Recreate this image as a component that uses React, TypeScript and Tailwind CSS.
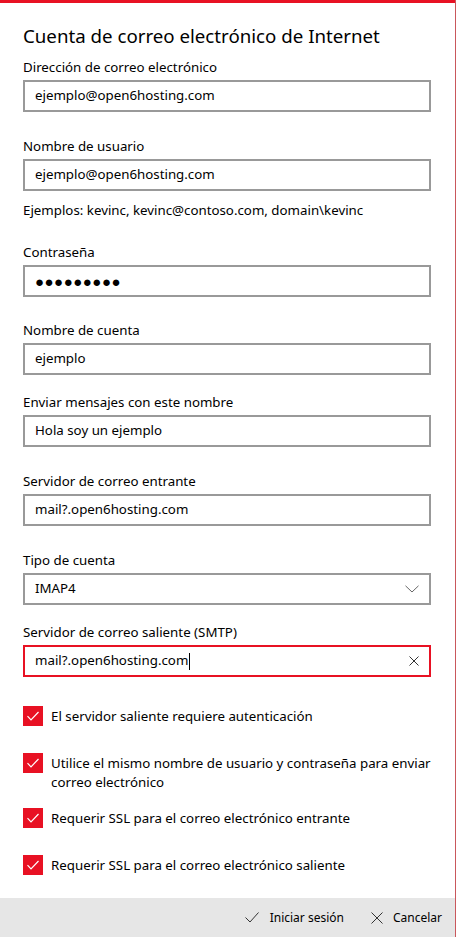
import type { ReactNode } from "react";

const font = { fontFamily: '"Noto Sans", "Open Sans", sans-serif' };

function Label({ children, className = "" }: { children: ReactNode; className?: string }) {
  return <p className={`h-5 text-[13.3px] leading-5 text-black ${className}`}>{children}</p>;
}

function Field({
  label,
  value,
  mt,
}: {
  label: string;
  value: ReactNode;
  mt: string;
}) {
  return (
    <div className={mt}>
      <Label>{label}</Label>
      <div className="mt-[3px] flex h-8 w-[408px] items-center border-2 border-[#999999] px-[10px] text-[13.3px] text-black">
        {value}
      </div>
    </div>
  );
}

function CheckRow({ children, mt }: { children: ReactNode; mt: string }) {
  return (
    <div className={`flex items-start gap-2 ${mt}`}>
      <span className="flex h-5 w-5 shrink-0 items-center justify-center bg-[#e81123]">
        <svg width="14" height="12" viewBox="0 0 14 12" fill="none">
          <path d="M1.5 6.2 L5 9.8 L12.5 2" stroke="white" strokeWidth="1.2" />
        </svg>
      </span>
      <p className="pt-px text-[13.3px] leading-[19px] text-black">{children}</p>
    </div>
  );
}

export default function App() {
  return (
    <div className="flex h-[937px] w-[457px] bg-white" style={font}>
      <div className="flex w-[456px] flex-col border-r border-[#c9575c]">
        <div className="h-[3px] bg-[#e81123]" />
        <div className="flex-1 pl-[23px]">
          <h1 className="mt-[19px] h-7 text-[18.7px] leading-7 text-black">
            Cuenta de correo electrónico de Internet
          </h1>
          <Field mt="mt-[7px]" label="Dirección de correo electrónico" value="ejemplo@open6hosting.com" />
          <Field mt="mt-6" label="Nombre de usuario" value="ejemplo@open6hosting.com" />
          <p className="mt-[9px] h-5 text-[13.3px] leading-5 text-black">
            Ejemplos: kevinc, kevinc@contoso.com, domain\kevinc
          </p>
          <Field
            mt="mt-[22px]"
            label="Contraseña"
            value={<span className="text-[15px] tracking-[0.5px]">●●●●●●●●●</span>}
          />
          <Field mt="mt-[23px]" label="Nombre de cuenta" value="ejemplo" />
          <Field mt="mt-[17px]" label="Enviar mensajes con este nombre" value="Hola soy un ejemplo" />
          <Field mt="mt-6" label="Servidor de correo entrante" value="mail?.open6hosting.com" />
          <div className="mt-6">
            <Label>Tipo de cuenta</Label>
            <div className="mt-[3px] flex h-8 w-[408px] items-center justify-between border-2 border-[#999999] pl-[10px] pr-[10px] text-[13.3px] text-black">
              <span>IMAP4</span>
              <svg width="14" height="8" viewBox="0 0 14 8" fill="none">
                <path d="M0.5 0.8 L7 7 L13.5 0.8" stroke="#666" strokeWidth="1" />
              </svg>
            </div>
          </div>
          <div className="mt-[17px]">
            <Label>Servidor de correo saliente (SMTP)</Label>
            <div className="mt-[3px] flex h-8 w-[408px] items-center justify-between border-2 border-[#e81123] pl-[10px] pr-[10px] text-[13.3px] text-black">
              <span className="flex items-center">
                mail?.open6hosting.com
                <span className="ml-px inline-block h-[17px] w-px bg-black" />
              </span>
              <svg width="10" height="10" viewBox="0 0 10 10" fill="none">
                <path d="M0.5 0.5 L9.5 9.5 M9.5 0.5 L0.5 9.5" stroke="#333" strokeWidth="1" />
              </svg>
            </div>
          </div>
          <CheckRow mt="mt-[29px]">El servidor saliente requiere autenticación</CheckRow>
          <CheckRow mt="mt-[27px]">
            Utilice el mismo nombre de usuario y contraseña para enviar
            <br />
            correo electrónico
          </CheckRow>
          <CheckRow mt="mt-4">Requerir SSL para el correo electrónico entrante</CheckRow>
          <CheckRow mt="mt-[27px]">Requerir SSL para el correo electrónico saliente</CheckRow>
        </div>
        <div className="flex h-[39px] items-center justify-end gap-[27px] bg-[#e6e6e6] pr-[13px] text-[12px] text-black">
          <span className="flex items-center gap-[11px]">
            <svg width="14" height="11" viewBox="0 0 14 11" fill="none">
              <path d="M0.5 5.5 L5 10 L13.5 0.5" stroke="#333" strokeWidth="1" />
            </svg>
            Iniciar sesión
          </span>
          <span className="flex items-center gap-[10px]">
            <svg width="12" height="12" viewBox="0 0 12 12" fill="none">
              <path d="M0.5 0.5 L11.5 11.5 M11.5 0.5 L0.5 11.5" stroke="#333" strokeWidth="1" />
            </svg>
            Cancelar
          </span>
        </div>
      </div>
    </div>
  );
}
